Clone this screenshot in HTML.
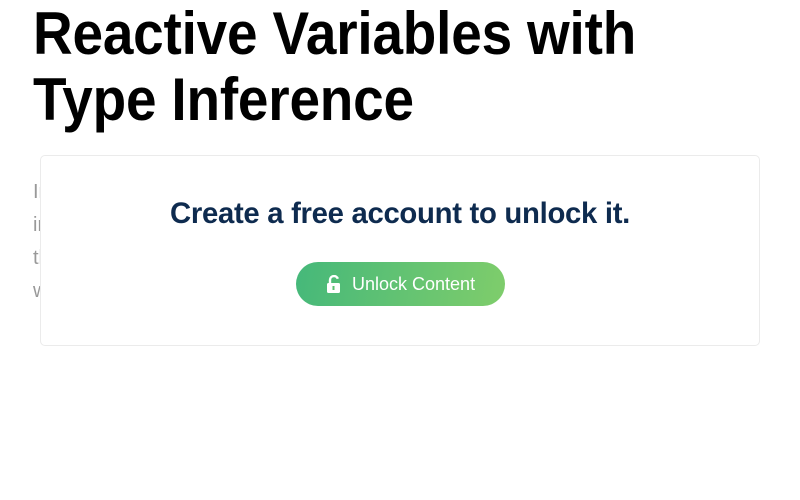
<!DOCTYPE html>
<html><head><style>
body{margin:0;width:800px;height:500px;background:#fff;overflow:hidden;position:relative;font-family:"Liberation Sans",sans-serif}
h1{position:absolute;left:33px;top:1px;margin:0;font-size:60px;line-height:66px;font-weight:bold;color:#000;transform:scaleX(0.915);transform-origin:left top;white-space:nowrap;letter-spacing:-0.2px}
.bg{position:absolute;left:33px;top:176px;font-size:20px;line-height:33px;color:#999;width:700px}
.card{position:absolute;left:40px;top:155px;width:718px;height:189px;background:#fff;border:1px solid #ebebeb;border-radius:5px}
.t{position:absolute;top:41px;left:0;width:718px;text-align:center;font-size:29.3px;font-weight:bold;color:#0e2b4f;letter-spacing:-0.3px}
.btn{position:absolute;left:255px;top:106px;width:209px;height:44px;border-radius:22px;background:linear-gradient(100deg,#45b87a,#7fcd6b);color:#fff;font-size:18px;line-height:44px}
.btn svg{position:absolute;left:30px;top:13px}
.btn span{position:absolute;left:56px;top:0}
</style></head><body>
<h1>Reactive Variables with<br>Type Inference</h1>
<div class="bg">In<br>in<br>th<br>wi</div>
<div class="card">
<div class="t">Create a free account to unlock it.</div>
<div class="btn"><svg width="16" height="18" viewBox="0 0 16 18"><path d="M4 8V5a4 4 0 0 1 7.8-1.2" fill="none" stroke="#fff" stroke-width="2.4"/><rect x="1" y="8" width="13" height="10" rx="1.5" fill="#fff"/><rect x="6.5" y="11" width="2" height="4" fill="#5cc272"/></svg><span>Unlock Content</span></div>
</div>
</body></html>
